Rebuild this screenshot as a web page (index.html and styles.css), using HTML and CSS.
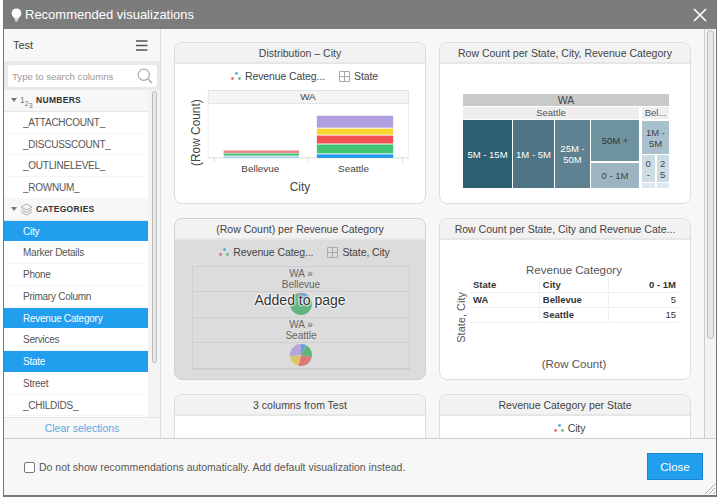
FILE: index.html
```html
<!DOCTYPE html>
<html lang="en">
<head>
  <meta charset="UTF-8" />
  <title>Recommended visualizations</title>
  <link rel="stylesheet" href="styles.css">
</head>
<body>

  <div class="dialog">
    <div class="dialog-head">
      <svg class="bulb" width="11" height="14" viewBox="0 0 12 15">
        <path d="M6 0.5a5.2 5.2 0 0 0-3 9.5c.6.5.8 1 .8 1.6h4.4c0-.6.2-1.1.8-1.6a5.2 5.2 0 0 0-3-9.5z" fill="#fff"/>
        <rect x="4" y="12.2" width="4" height="1" fill="#fff"/>
        <rect x="4.6" y="13.6" width="2.8" height="1" fill="#fff"/>
      </svg>
      <span class="dialog-title">Recommended visualizations</span>
      <svg class="close-x" width="14" height="14" viewBox="0 0 14 14">
        <path d="M1 1l12 12M13 1L1 13" stroke="#fff" stroke-width="1.6" fill="none"/>
      </svg>
    </div>

    <div class="dialog-body">
      <div class="side">
        <div class="side-head">
          <span>Test</span>
          <svg width="12" height="11" viewBox="0 0 12 11">
            <path d="M0 1h11.5M0 5.5h11.5M0 10h11.5" stroke="#555" stroke-width="1.4" fill="none"/>
          </svg>
        </div>
        <div class="search-wrap">
          <div class="search">
            <span>Type to search columns</span>
            <svg width="16" height="16" viewBox="0 0 16 16">
              <circle cx="6.8" cy="6.8" r="5.6" stroke="#aaa" stroke-width="1.2" fill="none"/>
              <path d="M11 11l4 4" stroke="#aaa" stroke-width="1.6"/>
            </svg>
          </div>
        </div>
        <div class="side-list">
          <div class="columns">
            <div class="group">
              <span class="caret"></span>
              <span class="nums">1<sub>2</sub><sub class="low">3</sub></span>
              <b>NUMBERS</b>
            </div>
            <div class="col">_ATTACHCOUNT_</div>
            <div class="col">_DISCUSSCOUNT_</div>
            <div class="col">_OUTLINELEVEL_</div>
            <div class="col">_ROWNUM_</div>
            <div class="group">
              <span class="caret"></span>
              <svg class="layers" width="13" height="13" viewBox="0 0 13 13">
                <path d="M6.5 1L12 4 6.5 7 1 4zM1 6.5l5.5 3 5.5-3M1 9l5.5 3 5.5-3" stroke="#999" stroke-width=".8" fill="none"/>
              </svg>
              <b>CATEGORIES</b>
            </div>
            <div class="col selected">City</div>
            <div class="col">Marker Details</div>
            <div class="col">Phone</div>
            <div class="col">Primary Column</div>
            <div class="col selected">Revenue Category</div>
            <div class="col">Services</div>
            <div class="col selected">State</div>
            <div class="col">Street</div>
            <div class="col">_CHILDIDS_</div>
          </div>
          <div class="side-scroll"><div class="thumb"></div></div>
        </div>
        <div class="clear">Clear selections</div>
      </div>

      <div class="main">
        <div class="cards">

          <div class="card">
            <div class="card-title">Distribution – City</div>
            <div class="legend">
              <svg class="dots" width="10" height="9" viewBox="0 0 10 9"><circle cx="5.5" cy="1.5" r="1.4" fill="#5aaee8"/><circle cx="1.5" cy="6.5" r="1.4" fill="#ee7070"/><circle cx="8.5" cy="6.5" r="1.4" fill="#5fc08a"/></svg>
              <span class="legend-text">Revenue Categ...</span>
              <svg class="gridicon" width="11" height="11" viewBox="0 0 11 11"><path d="M.5.5h10v10H.5zM.5 5.5h10M5.5.5v10" stroke="#aaa" fill="none"/></svg>
              <span>State</span>
            </div>
            <svg class="chart" width="250" height="116" viewBox="175 88 250 116">
              <rect x="207.5" y="90.5" width="202" height="13" fill="#f5f5f5" stroke="#e3e3e3"/>
              <text x="308" y="100.5" class="t10" text-anchor="middle">WA</text>
              <path d="M207.5 103v55M409.5 103v55" stroke="#eee"/>
              <path d="M207 158.5h202.500M213.500 158v5M308.500 158v5M403.500 158v5" stroke="#ddd"/>
              <rect x="223" y="151" width="76" height="2.500" fill="#ee8488"/>
              <rect x="223" y="154" width="76" height="2.200" fill="#45c276"/>
              <rect x="223" y="157" width="76" height="1.500" fill="#a6cdee"/>
              <rect x="317" y="116" width="77" height="12" fill="#b09fe0"/>
              <rect x="317" y="129" width="77" height="6" fill="#f8d42f"/>
              <rect x="317" y="136" width="77" height="8" fill="#f25253"/>
              <rect x="317" y="145" width="77" height="9" fill="#42c474"/>
              <rect x="317" y="155" width="77" height="3.500" fill="#1c97ea"/>
              <text x="260" y="172.500" class="t10" text-anchor="middle">Bellevue</text>
              <text x="354" y="172.500" class="t10" text-anchor="middle">Seattle</text>
              <text x="300" y="192" class="t12" text-anchor="middle">City</text>
              <text transform="translate(199 133) rotate(-90)" class="t12" text-anchor="middle">(Row Count)</text>
            </svg>
          </div>

          <div class="card">
            <div class="card-title">Row Count per State, City, Revenue Category</div>
            <div class="treemap">
              <div class="tm-state">WA</div>
              <div class="tm-row">
                <div class="tm-city tm-seattle">
                  <div class="tm-city-name">Seattle</div>
                  <div class="tm-cells">
                    <div class="cell c1">5M - 15M</div>
                    <div class="cell c2">1M - 5M</div>
                    <div class="cell c3">25M - 50M</div>
                    <div class="tm-stack">
                      <div class="cell c4">50M +</div>
                      <div class="cell c5">0 - 1M</div>
                    </div>
                  </div>
                </div>
                <div class="tm-city tm-bel">
                  <div class="tm-city-name">Bel...</div>
                  <div class="cell c6">1M - 5M</div>
                  <div class="tm-small">
                    <div class="cell c7">0 -</div>
                    <div class="cell c7">2 5</div>
                  </div>
                  <div class="tm-small tm-tiny">
                    <div class="cell c8"></div>
                    <div class="cell c8"></div>
                  </div>
                </div>
              </div>
            </div>
          </div>

          <div class="card added">
            <div class="card-title">(Row Count) per Revenue Category</div>
            <div class="legend">
              <svg class="dots" width="10" height="9" viewBox="0 0 10 9"><circle cx="5.5" cy="1.5" r="1.4" fill="#5aaee8"/><circle cx="1.5" cy="6.5" r="1.4" fill="#ee7070"/><circle cx="8.5" cy="6.5" r="1.4" fill="#5fc08a"/></svg>
              <span class="legend-text">Revenue Categ...</span>
              <svg class="gridicon" width="11" height="11" viewBox="0 0 11 11"><path d="M.5.5h10v10H.5zM.5 5.5h10M5.5.5v10" stroke="#aaa" fill="none"/></svg>
              <span>State, City</span>
            </div>
            <div class="panes">
              <div class="pane-head">WA »<br>Bellevue</div>
              <div class="pane-pie">
                <svg width="24" height="24" viewBox="0 0 24 24">
                  <g transform="rotate(-90 12 12)" fill="none" stroke-width="11">
                    <circle cx="12" cy="12" r="5.500" pathLength="100" stroke="#62b47f" stroke-dasharray="100 100"/>
                    <circle cx="12" cy="12" r="5.500" pathLength="100" stroke="#5aa5d8" stroke-dasharray="13 100"/>
                    <circle cx="12" cy="12" r="5.500" pathLength="100" stroke="#d97a78" stroke-dasharray="5 100" stroke-dashoffset="9"/>
                    <circle cx="12" cy="12" r="5.500" pathLength="100" stroke="#dcc764" stroke-dasharray="4 100" stroke-dashoffset="4"/>
                  </g>
                </svg>
              </div>
              <div class="pane-head">WA »<br>Seattle</div>
              <div class="pane-pie">
                <svg width="24" height="24" viewBox="0 0 24 24">
                  <g transform="rotate(-90 12 12)" fill="none" stroke-width="11">
                    <circle cx="12" cy="12" r="5.500" pathLength="100" stroke="#5aa5d8" stroke-dasharray="8 100"/>
                    <circle cx="12" cy="12" r="5.500" pathLength="100" stroke="#62b47f" stroke-dasharray="21 100" stroke-dashoffset="-8"/>
                    <circle cx="12" cy="12" r="5.500" pathLength="100" stroke="#d97a78" stroke-dasharray="25 100" stroke-dashoffset="-29"/>
                    <circle cx="12" cy="12" r="5.500" pathLength="100" stroke="#dcc764" stroke-dasharray="19 100" stroke-dashoffset="-54"/>
                    <circle cx="12" cy="12" r="5.500" pathLength="100" stroke="#b3a5d8" stroke-dasharray="27 100" stroke-dashoffset="-73"/>
                  </g>
                </svg>
              </div>
            </div>
            <div class="added-note">Added to page</div>
          </div>

          <div class="card">
            <div class="card-title">Row Count per State, City and Revenue Cate...</div>
            <div class="crosstab">
              <div class="ct-axis"><span>State, City</span></div>
              <div class="ct-main">
                <div class="ct-top">Revenue Category</div>
                <table>
                  <tr><th>State</th><th>City</th><th class="num">0 - 1M</th></tr>
                  <tr><th>WA</th><th>Bellevue</th><td class="num">5</td></tr>
                  <tr><th></th><th>Seattle</th><td class="num">15</td></tr>
                </table>
                <div class="ct-bottom">(Row Count)</div>
              </div>
            </div>
          </div>

          <div class="card">
            <div class="card-title">3 columns from Test</div>
          </div>

          <div class="card">
            <div class="card-title">Revenue Category per State</div>
            <div class="legend">
              <svg class="dots" width="10" height="9" viewBox="0 0 10 9"><circle cx="5.5" cy="1.5" r="1.4" fill="#5aaee8"/><circle cx="1.5" cy="6.5" r="1.4" fill="#ee7070"/><circle cx="8.5" cy="6.5" r="1.4" fill="#5fc08a"/></svg>
              <span class="legend-text small-city">City</span>
            </div>
          </div>

        </div>
      </div>

      <div class="main-scroll"><div class="thumb"></div></div>
    </div>

    <div class="dialog-foot">
      <span class="check"></span>
      <span class="foot-text">Do not show recommendations automatically. Add default visualization instead.</span>
      <button class="close-btn">Close</button>
      <svg class="grip" width="10" height="10" viewBox="0 0 10 10">
        <path d="M0 10L10 0M4 10l6-6M8 10l2-2" stroke="#999" stroke-width=".8"/>
      </svg>
    </div>
  </div>

</body>
</html>
```

FILE: styles.css
```css
* {
  box-sizing: border-box;
}

html, body {
  height: 100%;
}

body {
  margin: 0;
  background: #fff;
  font-family: 'Liberation Sans', Arial, sans-serif;
  color: #444;
  overflow: hidden;
}

.dialog {
  width: 714px;
  height: 497px;
  margin-left: 3px;
  display: flex;
  flex-direction: column;
  background: #f7f7f7;
  border: 1px solid #777;
  border-top: 0;
  border-bottom-width: 2px;
}

.dialog-head {
  height: 29px;
  flex: none;
  display: flex;
  align-items: center;
  padding: 0 9px 0 7px;
  background: #7c7c7c;
  color: #fff;
}

.bulb {
  margin-right: 3px;
}

.dialog-title {
  flex: 1;
  font-size: 13px;
}

.dialog-body {
  flex: 1;
  min-height: 0;
  display: flex;
}

/* left column picker */
.side {
  width: 157px;
  flex: none;
  display: flex;
  flex-direction: column;
  background: #f7f7f7;
  border-right: 1px solid #ddd;
}

.side-head {
  height: 32px;
  flex: none;
  display: flex;
  align-items: center;
  justify-content: space-between;
  padding: 0 12px 0 9px;
  font-size: 11px;
  color: #444;
}

.search-wrap {
  flex: none;
  height: 29px;
  padding: 4px 3px 3px 4px;
  background: #e9e9e9;
}

.search {
  height: 22px;
  display: flex;
  align-items: center;
  justify-content: space-between;
  padding: 0 4px;
  background: #fff;
  border-radius: 3px;
  font-size: 9.600px;
  color: #999;
}

.side-list {
  flex: 1;
  min-height: 0;
  display: flex;
  overflow: hidden;
}

.columns {
  width: 144px;
  flex: none;
  background: #fff;
}

.group {
  height: 21.750px;
  display: flex;
  align-items: center;
  padding-left: 7px;
  background: #f7f7f7;
  border-bottom: 1px solid #e6e6e6;
  font-size: 8.500px;
  letter-spacing: .3px;
  color: #333;
}

.caret {
  width: 0;
  height: 0;
  margin-right: 3px;
  border-left: 3px solid transparent;
  border-right: 3px solid transparent;
  border-top: 4px solid #777;
}

.nums {
  width: 13px;
  margin-right: 3px;
  font-size: 8.500px;
  letter-spacing: 0;
  white-space: nowrap;
  color: #777;
}

.nums sub {
  font-size: 7px;
  line-height: 0;
}

.nums .low {
  vertical-align: -5px;
}

.layers {
  margin-right: 3px;
}

.col {
  height: 21.750px;
  line-height: 21px;
  padding-left: 19px;
  font-size: 10px;
  letter-spacing: -.25px;
  color: #555;
  border-bottom: 1px solid #f5f5f5;
}

.col.selected {
  background: #219eee;
  color: #fff;
  border-bottom-color: #fff;
}

.side-scroll {
  flex: 1;
  padding: 1px 3px 0 4px;
  background: #f3f3f3;
}

.thumb {
  background: #e6e6e6;
  border: 1px solid #bbb;
  border-radius: 4px;
}

.side-scroll .thumb {
  height: 272px;
}

.clear {
  height: 21px;
  flex: none;
  line-height: 21px;
  text-align: center;
  font-size: 10.500px;
  color: #5ba7e6;
  border-top: 1px solid #e3e3e3;
}

/* recommendation cards */
.main {
  flex: 1;
  min-width: 0;
  overflow: hidden;
  padding: 13px 0 0 13px;
  background: #f7f7f7;
}

.cards {
  display: grid;
  grid-template-columns: 252px 252px;
  grid-auto-rows: 162px;
  column-gap: 13px;
  row-gap: 14px;
}

.card {
  position: relative;
  display: flex;
  flex-direction: column;
  background: #fff;
  border: 1px solid #ddd;
  border-radius: 8px;
  overflow: hidden;
}

.card-title {
  height: 21px;
  flex: none;
  line-height: 20px;
  text-align: center;
  font-size: 10.500px;
  color: #444;
  background: #f2f2f2;
  border-bottom: 2px solid #e6e6e6;
}

.legend {
  height: 24px;
  flex: none;
  display: flex;
  align-items: center;
  justify-content: center;
  padding-left: 9px;
  font-size: 10.500px;
  letter-spacing: -.1px;
  color: #444;
}

.dots {
  margin-right: 4px;
}

.legend-text {
  margin-right: 14px;
}

.small-city {
  margin-right: 0;
}

.gridicon {
  margin-right: 4px;
}

.chart {
  display: block;
}

.chart text {
  fill: #444;
  font-family: 'Liberation Sans', Arial, sans-serif;
}

.t10 {
  font-size: 10px;
}

.t12 {
  font-size: 12px;
}

/* treemap */
.treemap {
  margin: 30px 21px 0 23px;
  font-size: 9.500px;
  text-align: center;
  color: #444;
}

.tm-state {
  height: 12px;
  line-height: 12px;
  margin-bottom: 1px;
  background: #c9c9c9;
  font-size: 10.500px;
}

.tm-row {
  display: flex;
  gap: 3px;
}

.tm-seattle {
  width: 177px;
}

.tm-bel {
  width: 27px;
  display: flex;
  flex-direction: column;
  gap: 1px;
}

.tm-city-name {
  height: 12px;
  line-height: 12px;
  margin-bottom: 1px;
  background: #eee;
  color: #555;
}

.tm-cells {
  height: 68px;
  display: flex;
  gap: 1px;
}

.cell {
  display: flex;
  align-items: center;
  justify-content: center;
  line-height: 11px;
  color: #fff;
}

.c1 { width: 49px; background: #2c5f70; }
.c2 { width: 41px; background: #4e7585; }
.c3 { width: 35px; background: #5e8292; padding: 0 3px; }
.c4 { height: 41px; background: #6f929f; color: #333; }
.c5 { flex: 1; background: #9db5c2; color: #444; }
.c6 { height: 33px; background: #a9c0ce; color: #444; padding: 0 2px; }
.c7 { flex: 1; width: 13px; background: #cddbe5; color: #444; padding: 0 3px; }
.c8 { flex: 1; background: #dde7ef; }

.tm-stack {
  flex: 1;
  display: flex;
  flex-direction: column;
  gap: 2px;
}

.tm-small {
  height: 27px;
  display: flex;
  gap: 2px;
}

.tm-tiny {
  height: 5px;
}

/* card that was already added */
.added {
  background: #dcdcdc;
  border-color: #d0d0d0;
}

.panes {
  margin: 2px 15px 0 17px;
  border: 1px solid #cfcfcf;
  border-bottom-width: 2px;
  font-size: 10px;
  color: #666;
  text-align: center;
}

.pane-head {
  height: 25px;
  padding-top: 1px;
  line-height: 11px;
  border-bottom: 1px solid #cfcfcf;
}

.pane-pie {
  height: 25.500px;
  display: flex;
  align-items: center;
  justify-content: center;
  border-bottom: 1px solid #cfcfcf;
}

.pane-pie:last-child {
  border-bottom: 0;
}

.added-note {
  position: absolute;
  left: 0;
  right: 0;
  top: 73px;
  text-align: center;
  font-size: 14px;
  color: #333;
  text-shadow: 0 0 2px #fff, 0 0 2px #fff, 0 0 2px #fff, 0 0 3px #fff;
}

/* crosstab */
.crosstab {
  flex: 1;
  display: flex;
}

.ct-axis {
  width: 30px;
  flex: none;
  display: flex;
  align-items: center;
  justify-content: flex-end;
  padding-top: 15px;
}

.ct-axis span {
  writing-mode: vertical-rl;
  transform: rotate(180deg);
  font-size: 11px;
  color: #555;
  margin-right: 3px;
}

.ct-main {
  width: 208px;
}

.ct-top {
  margin-top: 23px;
  height: 14px;
  line-height: 14px;
  text-align: center;
  font-size: 11.500px;
  color: #555;
}

table {
  width: 100%;
  table-layout: fixed;
  border-collapse: collapse;
  font-size: 9.500px;
  color: #333;
}

th, td {
  height: 15px;
  padding: 0 2px 0 3px;
  text-align: left;
  border-right: 1px solid #f0f0f0;
  border-bottom: 1px solid #f0f0f0;
}

th:last-child, td:last-child {
  border-right: 0;
}

.num {
  text-align: right;
}

td.num {
  font-weight: normal;
}

.ct-bottom {
  margin-top: 35px;
  text-align: center;
  font-size: 11.500px;
  color: #555;
}

.main-scroll {
  width: 12px;
  flex: none;
  padding: 1px 2px 0 2px;
  background: #f3f3f3;
  border-left: 1px solid #ccc;
}

.main-scroll .thumb {
  height: 309px;
}

/* footer */
.dialog-foot {
  position: relative;
  height: 57px;
  flex: none;
  display: flex;
  align-items: center;
  padding: 0 13px 0 20px;
  background: #f7f7f7;
  border-top: 1px solid #ccc;
}

.check {
  width: 11px;
  height: 11px;
  margin-right: 4px;
  background: #fff;
  border: 1px solid #777;
  border-radius: 2px;
}

.foot-text {
  flex: 1;
  font-size: 10.500px;
  color: #555;
}

.close-btn {
  width: 56px;
  height: 27px;
  margin-bottom: 1px;
  font-family: 'Liberation Sans', Arial, sans-serif;
  font-size: 11.500px;
  color: #fff;
  background: #219eee;
  border: 1px solid #1a86cf;
}

.grip {
  position: absolute;
  right: 1px;
  bottom: 1px;
}
```
